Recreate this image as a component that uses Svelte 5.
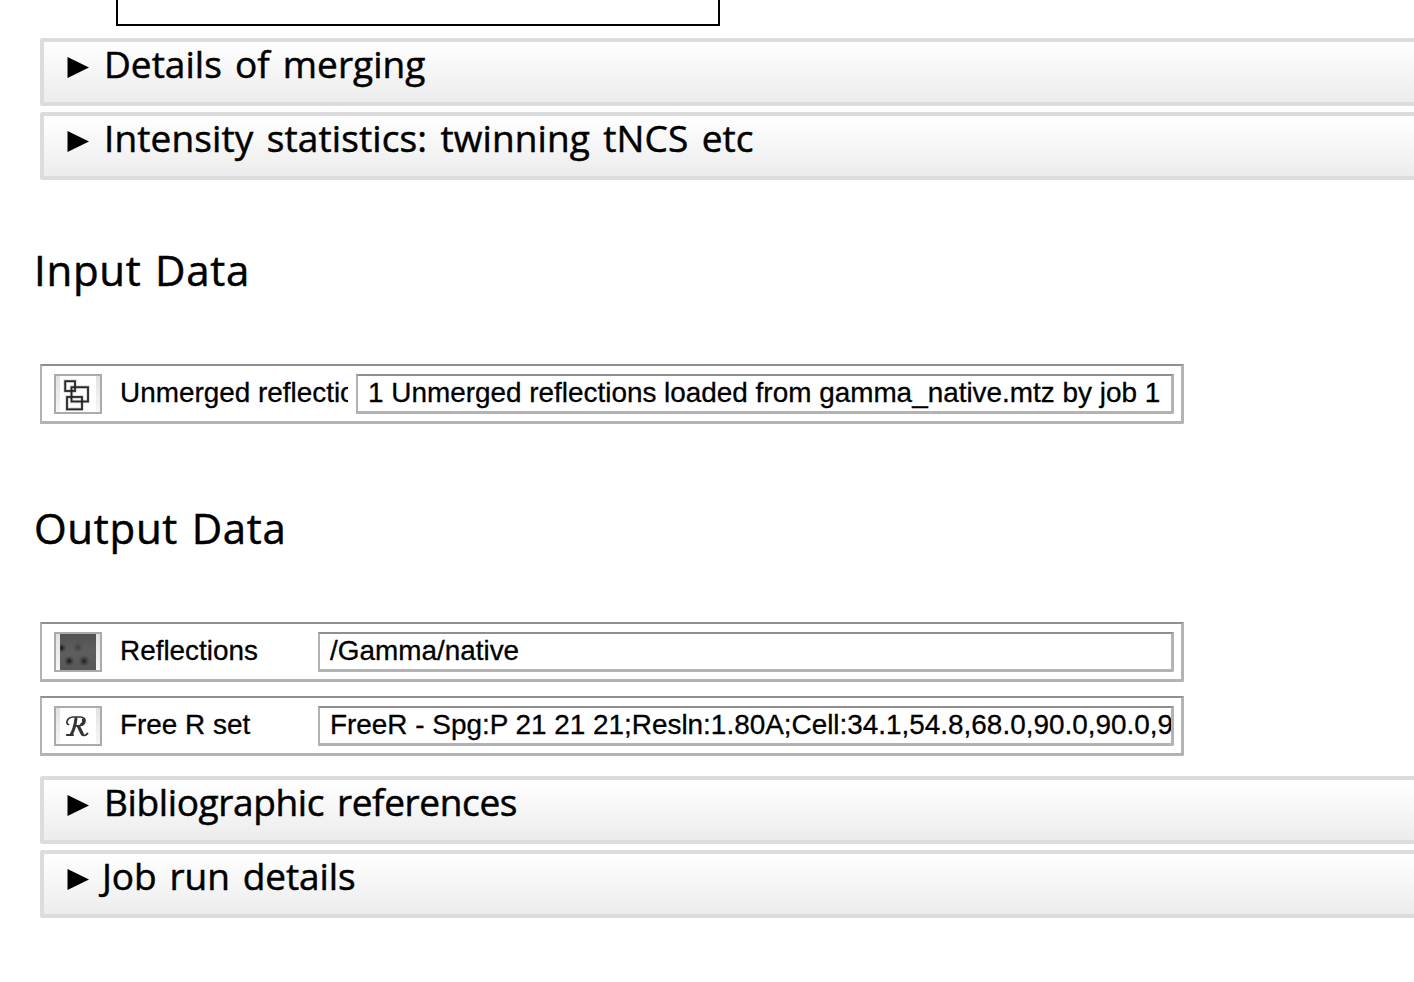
<script>
  const upper = [
    { title: 'Details of merging', spacing: 0.02 },
    { title: 'Intensity statistics: twinning tNCS etc', spacing: 0.12 },
  ];
  const lower = [
    { title: 'Bibliographic references', spacing: -0.37 },
    { title: 'Job run details', spacing: -0.1 },
  ];
  const inputs = [
    { icon: 'unmerged', label: 'Unmerged reflections', value: '1 Unmerged reflections loaded from gamma_native.mtz by job 1', wide: true },
  ];
  const outputs = [
    { icon: 'pattern', label: 'Reflections', value: '/Gamma/native' },
    { icon: 'freer', label: 'Free R set', value: 'FreeR - Spg:P 21 21 21;Resln:1.80A;Cell:34.1,54.8,68.0,90.0,90.0,90.0' },
  ];
</script>

{#snippet fold(item)}
  <div class="fold">
    <svg class="arrow" width="22" height="22" viewBox="0 0 22 22"><path d="M.5 0 22 10.500 .5 21Z" /></svg>
    <span class="title" class:hook={item.title.startsWith('J')} style="letter-spacing: {item.spacing}px">{item.title}</span>
  </div>
{/snippet}

{#snippet data(item)}
  <div class="row">
    <div class="icon">
      {#if item.icon === 'unmerged'}
        <svg width="36" height="36" viewBox="0 0 36 36">
          <rect width="36" height="36" fill="#fff" />
          <g fill="none" stroke="#000" stroke-opacity=".16" stroke-width="3.6">
            <rect x="5.200" y="5.200" width="9.800" height="9.800" /><rect x="11.500" y="11.200" width="16.500" height="14.300" /><rect x="7" y="21" width="15" height="12.300" />
          </g>
          <g fill="none" stroke="#262626" stroke-width="1.8">
            <rect x="5.200" y="5.200" width="9.800" height="9.800" /><rect x="11.500" y="11.200" width="16.500" height="14.300" /><rect x="7" y="21" width="15" height="12.300" />
          </g>
        </svg>
      {:else if item.icon === 'pattern'}
        <svg width="36" height="36" viewBox="0 0 36 36">
          <defs>
            <radialGradient id="dot"><stop offset="0" stop-color="#101010" /><stop offset="1" stop-color="#3c3c3c" stop-opacity="0" /></radialGradient>
            <linearGradient id="film" x2="0" y2="1"><stop offset="0" stop-color="#525252" /><stop offset=".5" stop-color="#5e5e5e" /><stop offset="1" stop-color="#575757" /></linearGradient>
          </defs>
          <rect width="36" height="36" fill="url(#film)" />
          <circle cx="1.700" cy="14" r="5" fill="url(#dot)" />
          <circle cx="18" cy="13.5" r="5.500" fill="url(#dot)" opacity=".4" />
          <circle cx="9.2" cy="27" r="5.500" fill="url(#dot)" />
          <circle cx="24.2" cy="27" r="6" fill="url(#dot)" opacity=".85" />
        </svg>
      {:else}
        <svg width="36" height="36" viewBox="0 0 36 36">
          <rect width="36" height="36" fill="#fff" />
          <g fill="none" stroke="#333" stroke-linecap="round" stroke-linejoin="round">
            <path stroke-width="1.700" d="M8.500 16.500C5.500 16 6.500 9.500 13 9H20.500C27 9.300 26.500 17 19 17.800H15.500" />
            <path stroke-width="3" d="M16 10.500C15.300 16 14 22 11.200 26.500" />
            <path stroke-width="2" d="M6.800 27H13" />
            <path stroke-width="3.200" d="M18.500 18.500 22.300 26" />
            <path stroke-width="1.900" d="M22.300 26.500C23.500 28 26 27.500 27.500 25.500" />
            <path stroke-width="2.800" d="M23.300 11.500C24 13.500 23.300 15.500 21.500 16.500" />
          </g>
        </svg>
      {/if}
    </div>
    <div class="label" class:narrow={!item.wide}>{item.label}</div>
    <div class="value">{item.value}</div>
  </div>
{/snippet}

<main>
  <div class="frame"></div>
  {#each upper as item}{@render fold(item)}{/each}
  <h2>Input Data</h2>
  {#each inputs as item}{@render data(item)}{/each}
  <h2 class="second">Output Data</h2>
  {#each outputs as item}{@render data(item)}{/each}
  <div class="tail">
    {#each lower as item}{@render fold(item)}{/each}
  </div>
</main>

<style>
  :global(body) { margin: 0; background: #fff; }
  main {
    box-sizing: border-box;
    width: 1414px;
    height: 982px;
    overflow: hidden;
    padding-left: 40px;
    color: #000;
    font-family: "Open Sans", "Noto Sans", sans-serif;
  }
  .frame {
    box-sizing: border-box;
    width: 604px;
    height: 26px;
    margin: 0 0 12px 76px;
    border: 2px solid #000;
    border-top: 0;
  }
  .fold {
    box-sizing: border-box;
    display: flex;
    align-items: flex-start;
    height: 68px;
    margin-bottom: 6px;
    padding-left: 23px;
    border: 4px solid #dcdcdc;
    border-right: 0;
    border-radius: 3px 0 0 3px;
    background: linear-gradient(#fff, #ececec) padding-box;
  }
  .arrow { flex: none; margin-top: 15px; }
  .title {
    margin: -5px 0 0 15px;
    font-size: 37px;
    line-height: 53px;
    word-spacing: 3.5px;
    white-space: nowrap;
    -webkit-text-stroke: 0.5px #000;
  }
  .hook { margin-left: 13px; }
  h2 {
    height: 60px;
    margin: 60px 0 64px -6px;
    font-size: 42px;
    font-weight: 400;
    line-height: 60px;
    letter-spacing: 0.7px;
    word-spacing: 2px;
    white-space: nowrap;
    -webkit-text-stroke: 0.5px #000;
  }
  h2.second { margin-top: 74px; }
  .row {
    box-sizing: border-box;
    display: flex;
    width: 1144px;
    height: 60px;
    margin-bottom: 14px;
    padding: 8px 7px 0 12px;
    border: solid #b3b3b3;
    border-width: 2px 3px 3px 2px;
    border-top-color: #8f8f8f;
    border-radius: 0 0 2px 0;
    font: 27.9px "Liberation Sans", Arial, sans-serif;
    line-height: 37px;
    white-space: nowrap;
    -webkit-text-stroke: 0.3px #000;
  }
  .icon {
    box-sizing: border-box;
    flex: none;
    width: 48px;
    height: 40px;
    padding: 0 4px;
    border: 2px solid #ababab;
    background: linear-gradient(#e2e2e2, #f6f6f6);
  }
  .icon svg { display: block; }
  .label {
    flex: none;
    width: 228px;
    margin: 0 8px 0 18px;
    overflow: hidden;
  }
  .label.narrow { width: 190px; }
  .value {
    box-sizing: border-box;
    flex: 1;
    min-width: 0;
    height: 40px;
    padding-left: 10px;
    overflow: hidden;
    border: solid #b3b3b3;
    border-width: 2px 3px 3px 2px;
    border-top-color: #8f8f8f;
    border-radius: 0 0 2px 0;
    line-height: 33px;
  }
  .tail { margin-top: 20px; }
</style>
